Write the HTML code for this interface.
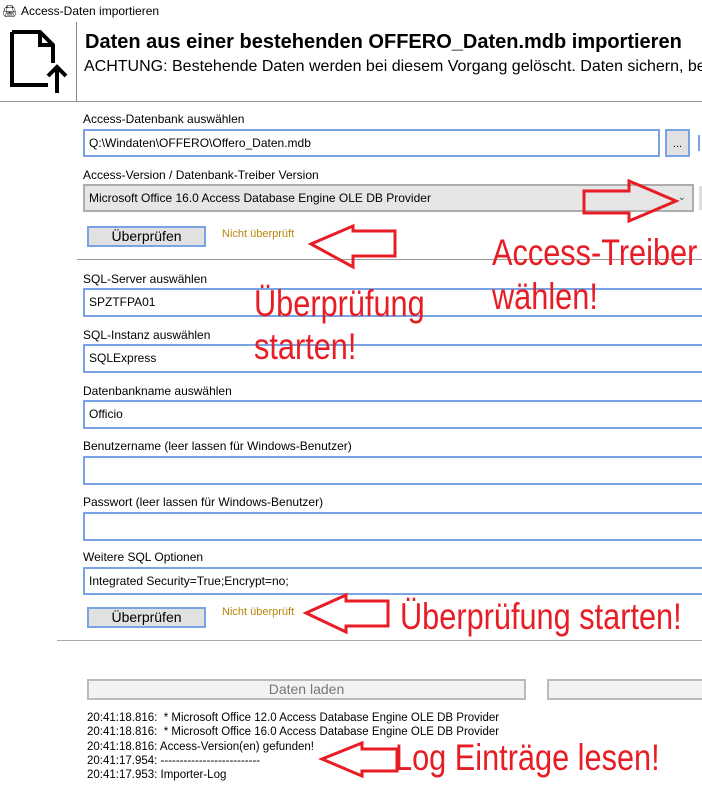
<!DOCTYPE html>
<html><head><meta charset="utf-8"><style>
body{margin:0;width:702px;height:803px;overflow:hidden;background:#fff;font-family:"Liberation Sans",sans-serif;position:relative;color:#000}
.a{position:absolute;white-space:nowrap}
.lbl{font-size:12px}
.in{position:absolute;left:83px;border:2px solid #7aa3e5;box-sizing:border-box;background:#fff;font-size:12px;padding:0 0 0 4px;line-height:24px}
.btn{position:absolute;left:87px;width:119px;height:21px;box-sizing:border-box;border:2px solid #7aa3e5;background:#e1e1e1;font-size:14px;text-align:center;line-height:17px}
.nu{position:absolute;left:222px;font-size:11px;color:#b8860b}
.red{position:absolute;color:#e81c24;font-size:37px;white-space:nowrap;line-height:1;transform:scaleX(0.83);transform-origin:0 0}
.log{position:absolute;left:87px;font-size:11.5px}
</style></head><body>
<div class="a" style="left:2px;top:4px;font-size:12px;">&#x1F5A8;</div>
<div class="a" style="left:21px;top:4px;font-size:12px;">Access-Daten importieren</div>
<svg class="a" style="left:0;top:0" width="76" height="100"><path d="M12 32H40L53 45V63M40 32V45H53M12 32V85H48" fill="none" stroke="#000" stroke-width="4"/><path d="M57 93V68M48 76L57 67L66 76" fill="none" stroke="#000" stroke-width="4"/></svg>
<div class="a" style="left:76px;top:22px;width:1px;height:80px;background:#888"></div>
<div class="a" style="left:0;top:101px;width:702px;height:1px;background:#999"></div>
<div class="a" style="left:85px;top:31px;font-size:20px;font-weight:bold">Daten aus einer bestehenden OFFERO_Daten.mdb importieren</div>
<div class="a" style="left:84px;top:58px;font-size:16px">ACHTUNG: Bestehende Daten werden bei diesem Vorgang gelöscht. Daten sichern, bevor</div>

<div class="a lbl" style="left:83px;top:112px">Access-Datenbank auswählen</div>
<div class="in" style="top:129px;width:577px;height:28px">Q:\Windaten\OFFERO\Offero_Daten.mdb</div>
<div class="a" style="left:665px;top:129px;width:25px;height:28px;box-sizing:border-box;border:2px solid #7aa3e5;background:#e1e1e1;font-size:11px;text-align:center;line-height:26px">...</div>
<div class="a" style="left:698px;top:135px;width:2px;height:16px;background:#7aa3e5"></div>
<div class="a lbl" style="left:83px;top:168px">Access-Version / Datenbank-Treiber Version</div>
<div class="in" style="top:184px;width:611px;height:28px;border-color:#adadad;background:#e6e6e6">Microsoft Office 16.0 Access Database Engine OLE DB Provider<span style="position:absolute;right:6px;top:0;font-size:10px;color:#555">&#8964;</span></div>
<div class="a" style="left:699px;top:186px;width:3px;height:24px;background:#ddd"></div>
<div class="btn" style="top:226px">Überprüfen</div>
<div class="nu" style="top:228px">Nicht überprüft</div>
<div class="a" style="left:77px;top:259px;width:625px;height:1px;background:#999"></div>

<div class="a lbl" style="left:83px;top:272px">SQL-Server auswählen</div>
<div class="in" style="top:288px;width:640px;height:29px">SPZTFPA01</div>
<div class="a lbl" style="left:83px;top:328px">SQL-Instanz auswählen</div>
<div class="in" style="top:344px;width:640px;height:29px">SQLExpress</div>
<div class="a lbl" style="left:83px;top:384px">Datenbankname auswählen</div>
<div class="in" style="top:400px;width:640px;height:29px">Officio</div>
<div class="a lbl" style="left:83px;top:439px">Benutzername (leer lassen für Windows-Benutzer)</div>
<div class="in" style="top:456px;width:640px;height:29px"></div>
<div class="a lbl" style="left:83px;top:495px">Passwort (leer lassen für Windows-Benutzer)</div>
<div class="in" style="top:512px;width:640px;height:29px"></div>
<div class="a lbl" style="left:83px;top:550px">Weitere SQL Optionen</div>
<div class="in" style="top:567px;width:640px;height:28px">Integrated Security=True;Encrypt=no;</div>
<div class="btn" style="top:607px">Überprüfen</div>
<div class="nu" style="top:606px">Nicht überprüft</div>
<div class="a" style="left:57px;top:640px;width:645px;height:1px;background:#aaa"></div>

<div class="a" style="left:87px;top:679px;width:439px;height:21px;box-sizing:border-box;border:2px solid #bbb;background:#f2f2f2;color:#777;font-size:14px;text-align:center;line-height:17px">Daten laden</div>
<div class="a" style="left:547px;top:679px;width:160px;height:21px;box-sizing:border-box;border:2px solid #bbb;background:#f2f2f2"></div>
<div class="log" style="top:712px">20:41:18.816:&nbsp; * Microsoft Office 12.0 Access Database Engine OLE DB Provider</div>
<div class="log" style="top:726px">20:41:18.816:&nbsp; * Microsoft Office 16.0 Access Database Engine OLE DB Provider</div>
<div class="log" style="top:741px">20:41:18.816: Access-Version(en) gefunden!</div>
<div class="log" style="top:755px">20:41:17.954: --------------------------</div>
<div class="log" style="top:769px">20:41:17.953: Importer-Log</div>

<svg class="a" style="left:0;top:0" width="702" height="803">
<g fill="none" stroke="#e81c24" stroke-width="3">
<path d="M584 191H629V181L676 201L629 221V213H584Z"/>
<path d="M311 244L353 226V231H395V256H353V267Z"/>
<path d="M306 613L346 595V601H388V626H346V632Z"/>
<path d="M322 759L362 743V749H397V771H362V776Z"/>
</g></svg>
<div class="red" style="left:492px;top:234px">Access-Treiber</div>
<div class="red" style="left:492px;top:278px">wählen!</div>
<div class="red" style="left:254px;top:285px">Überprüfung</div>
<div class="red" style="left:254px;top:328px">starten!</div>
<div class="red" style="left:400px;top:598px">Überprüfung starten!</div>
<div class="red" style="left:395px;top:739px">Log Einträge lesen!</div>
</body></html>
